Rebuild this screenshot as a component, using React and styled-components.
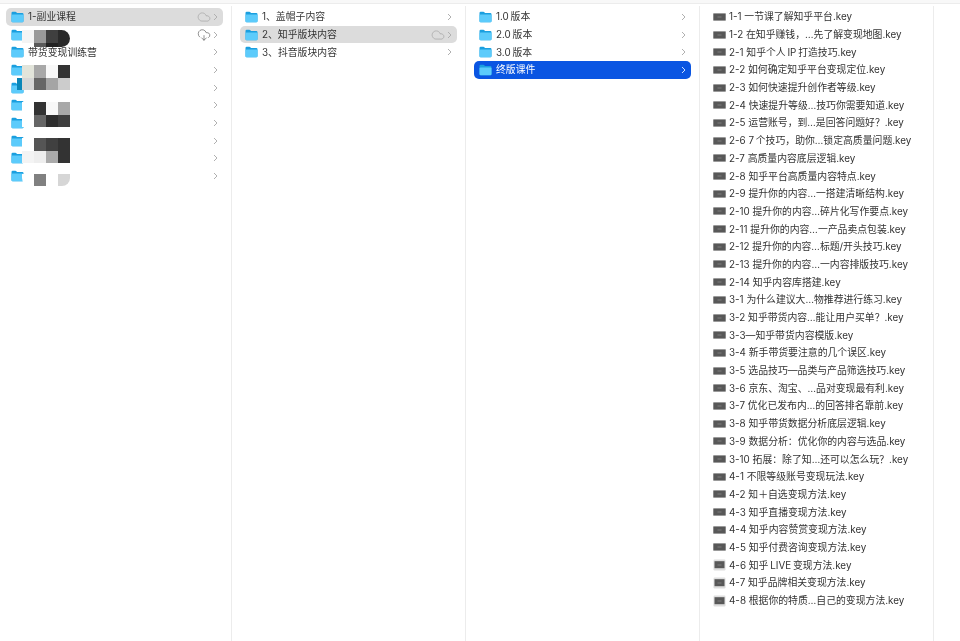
import React from 'react';
import styled, { createGlobalStyle } from 'styled-components';
import { CloudDownload, Cloud } from 'lucide-react';

const GlobalStyle = createGlobalStyle`
	html, body {
		margin: 0;
		padding: 0;
		background: #fff;
	}
	body {
		font-family: 'Inter', 'Noto Sans CJK SC', sans-serif;
		overflow: hidden;
	}
`;

const firstColumn = [
	{ name: '1-副业课程', active: true, cloud: 'dotted' },
	{ name: '', cloud: 'download' },
	{ name: '带货变现训练营' },
	{ name: '' },
	{ name: '' },
	{ name: '' },
	{ name: '' },
	{ name: '' },
	{ name: '' },
	{ name: '' },
];

const secondColumn = [
	{ name: '1、盖帽子内容' },
	{ name: '2、知乎版块内容', active: true, cloud: 'dotted' },
	{ name: '3、抖音版块内容' },
];

const thirdColumn = [
	{ name: '1.0\u2009版本' },
	{ name: '2.0\u2009版本' },
	{ name: '3.0\u2009版本' },
	{ name: '终版课件', focused: true },
];

const files = [
	'1-1 一节课了解知乎平台.key',
	'1-2 在知乎赚钱，…先了解变现地图.key',
	'2-1 知乎个人\u2009IP\u2009打造技巧.key',
	'2-2 如何确定知乎平台变现定位.key',
	'2-3 如何快速提升创作者等级.key',
	'2-4 快速提升等级…技巧你需要知道.key',
	'2-5 运营账号，到…是回答问题好？.key',
	'2-6 7\u2009个技巧，助你…锁定高质量问题.key',
	'2-7 高质量内容底层逻辑.key',
	'2-8 知乎平台高质量内容特点.key',
	'2-9 提升你的内容…一搭建清晰结构.key',
	'2-10 提升你的内容…碎片化写作要点.key',
	'2-11 提升你的内容…一产品卖点包装.key',
	'2-12 提升你的内容…标题/开头技巧.key',
	'2-13 提升你的内容…一内容排版技巧.key',
	'2-14 知乎内容库搭建.key',
	'3-1 为什么建议大…物推荐进行练习.key',
	'3-2 知乎带货内容…能让用户买单？.key',
	'3-3—知乎带货内容模版.key',
	'3-4 新手带货要注意的几个误区.key',
	'3-5 选品技巧—品类与产品筛选技巧.key',
	'3-6 京东、淘宝、…品对变现最有利.key',
	'3-7 优化已发布内…的回答排名靠前.key',
	'3-8 知乎带货数据分析底层逻辑.key',
	'3-9 数据分析：优化你的内容与选品.key',
	'3-10 拓展：除了知…还可以怎么玩？.key',
	'4-1 不限等级账号变现玩法.key',
	'4-2 知＋自选变现方法.key',
	'4-3 知乎直播变现方法.key',
	'4-4 知乎内容赞赏变现方法.key',
	'4-5 知乎付费咨询变现方法.key',
	'4-6 知乎\u2009LIVE\u2009变现方法.key',
	'4-7 知乎品牌相关变现方法.key',
	'4-8 根据你的特质…自己的变现方法.key',
];

// pixelated patches that hide the folder names in the first column
const mosaics = [
	{ top: 30, height: 17, round: '0 10px 10px 0', cells: ['#f4f4f4', '#999', '#3f3f3f', '#2a2a2a', '#fff', '#5a5a5a', '#222', '#2a2a2a'] },
	{ top: 65, height: 25, round: '0', cells: ['#e2e4da', '#a8a8a8', '#f8f8f8', '#333', '#d6d6d6', '#666', '#a5a5a5', '#ccc'] },
	{ top: 102, height: 25, round: '0', cells: ['#fff', '#333', '#f8f8f8', '#a8a8a8', '#fff', '#666', '#2e2e2e', '#3e3e3e'] },
	{ top: 138, height: 25, round: '0', cells: ['#fff', '#555', '#404040', '#333', '#f4f4f4', '#eee', '#aaa', '#333'] },
	{ top: 174, height: 12, round: '0 0 8px 8px', cells: ['#fff', '#808080', '#fff', '#d6d6d6'] },
];

const FolderIcon = () => (
	<svg width="13" height="12" viewBox="0 0 13 12">
		<path d="M0.5 2 Q0.5 0.8 1.7 0.8 H4.4 Q5 0.8 5.4 1.3 L6 2 H11.3 Q12.5 2 12.5 3.2 V10 Q12.5 11.2 11.3 11.2 H1.7 Q0.5 11.2 0.5 10 Z" fill="#1b9fdf" />
		<path d="M0.5 4.4 Q0.5 3.4 1.6 3.4 H11.4 Q12.5 3.4 12.5 4.4 V10 Q12.5 11.2 11.3 11.2 H1.7 Q0.5 11.2 0.5 10 Z" fill="#5ccbfb" />
	</svg>
);

const KeyIcon = ({ framed }) => (
	<svg width="13" height="12" viewBox="0 0 13 12">
		{framed && <rect x="0.5" y="0.5" width="12" height="11" rx="1.2" fill="#dedede" />}
		<rect x={framed ? 1.5 : 0.3} y={framed ? 2.2 : 2.4} width={framed ? 10 : 12.4} height={framed ? 7 : 7.2} fill="#585858" />
		<rect x="4.5" y="5.5" width="4" height="1" fill="#7c7c7c" />
	</svg>
);

const Chevron = ({ color }) => (
	<svg width="5" height="8" viewBox="0 0 5 8">
		<path d="M1 1 L4 4 L1 7" fill="none" stroke={color} strokeWidth="1" />
	</svg>
);

const FolderRow = ({ item }) => (
	<Row $active={item.active} $focused={item.focused}>
		<FolderIcon />
		<Name $focused={item.focused}>{item.name}</Name>
		{item.cloud === 'dotted' && (
			<CloudSlot>
				<Cloud size={14} strokeWidth={0.9} color="#9a9a9a" strokeDasharray="1 1" />
			</CloudSlot>
		)}
		{item.cloud === 'download' && (
			<CloudSlot>
				<CloudDownload size={14} strokeWidth={1.1} color="#555" />
			</CloudSlot>
		)}
		<Chevron color={item.focused ? '#cfe0ff' : '#b0b0b0'} />
	</Row>
);

const App = () => {
	return (
		<>
			<GlobalStyle />
			<TopStrip />
			<Browser>
				<Column>
					{firstColumn.map((item, i) => (
						<FolderRow key={i} item={item} />
					))}
					<Smear />
					{mosaics.map(m => (
						<Mosaic key={m.top} $top={m.top} $height={m.height} $round={m.round}>
							{m.cells.map((c, i) => (
								<Cell key={i} $color={c} />
							))}
						</Mosaic>
					))}
				</Column>
				<Column>
					{secondColumn.map(item => (
						<FolderRow key={item.name} item={item} />
					))}
				</Column>
				<Column>
					{thirdColumn.map(item => (
						<FolderRow key={item.name} item={item} />
					))}
				</Column>
				<Column>
					{files.map((file, i) => (
						<FileRow key={file}>
							<KeyIcon framed={i >= 31} />
							<FileName>{file}</FileName>
						</FileRow>
					))}
				</Column>
			</Browser>
		</>
	);
};

export default App;

const TopStrip = styled.div`
	height: 3px;
	background: #f8f8f8;
	border-bottom: 1px solid #ececec;
`;

const Browser = styled.div`
	display: flex;
	height: 637px;
	padding-top: 2px;
	box-sizing: border-box;
	filter: blur(0.3px);
`;

const Column = styled.div`
	position: relative;
	box-sizing: border-box;
	width: 232px;
	margin-right: 2px;
	padding: 2px 8px 0 6px;
	border-right: 1px solid #ececec;
`;

const Row = styled.div`
	display: flex;
	align-items: center;
	box-sizing: border-box;
	height: 17.7px;
	padding: 0 5px 0 5px;
	border-radius: 5px;
	background: ${props => (props.$focused ? '#0a55e2' : props.$active ? '#dcdcdc' : 'transparent')};
`;

const FileRow = styled.div`
	display: flex;
	align-items: center;
	height: 17.7px;
	padding-left: 5px;
`;

const Name = styled.span`
	flex: 1;
	margin-left: 4px;
	font-size: 9.85px;
	line-height: 17px;
	white-space: nowrap;
	color: ${props => (props.$focused ? '#fff' : '#333')};
`;

const FileName = styled(Name)`
	margin-left: 3px;
`;

const CloudSlot = styled.span`
	display: flex;
	margin-right: 2px;
`;

const Mosaic = styled.div`
	position: absolute;
	top: ${props => props.$top - 6}px;
	left: 22px;
	height: ${props => props.$height}px;
	display: grid;
	grid-template-columns: repeat(4, 12px);
	grid-auto-rows: 12.5px;
	border-radius: ${props => props.$round};
	overflow: hidden;
`;

const Cell = styled.div`
	background: ${props => props.$color};
`;

const Smear = styled.div`
	position: absolute;
	top: 72px;
	left: 17px;
	width: 5px;
	height: 12px;
	background: #0a86b8;
`;
